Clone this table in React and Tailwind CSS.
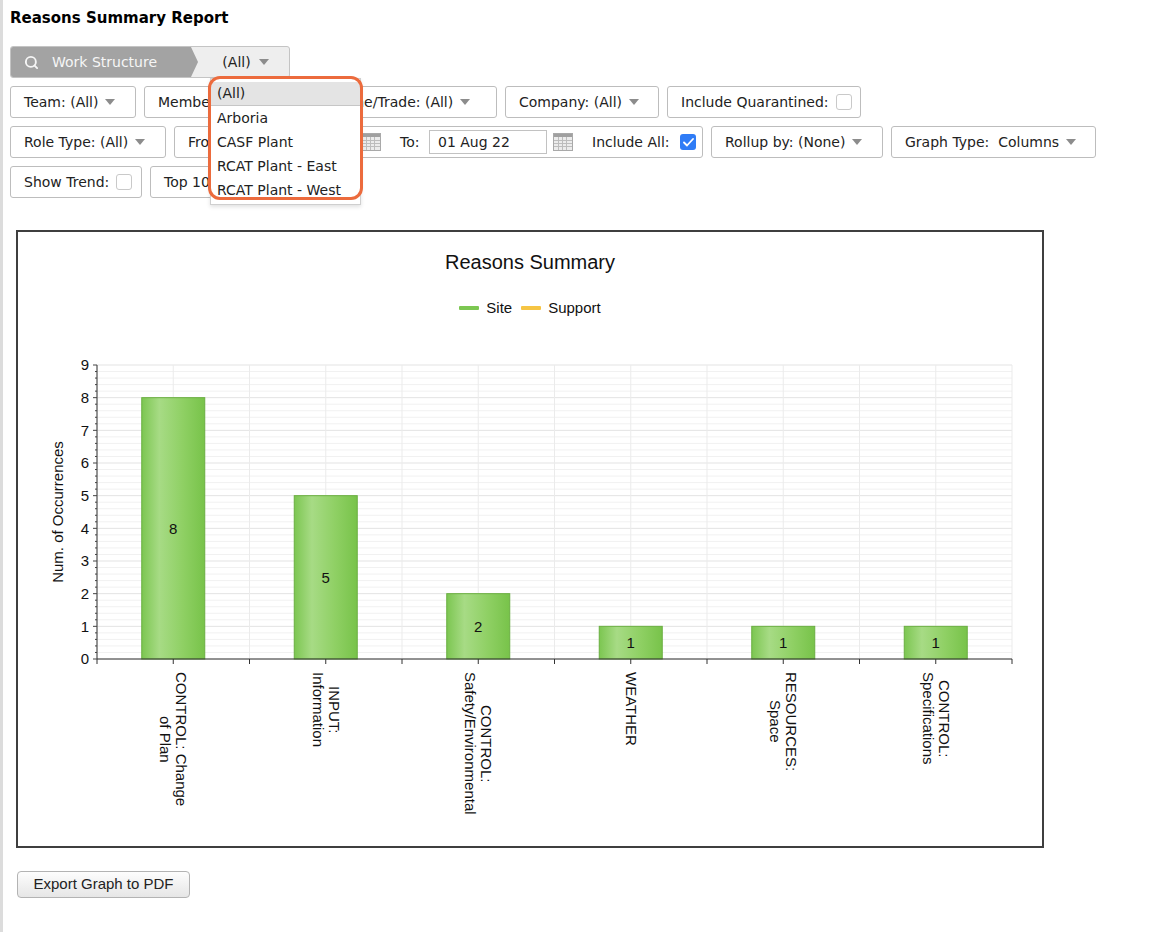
import { Search } from 'lucide-react'

const BARS = [
	{ label: ['CONTROL: Change', 'of Plan'], value: 8 },
	{ label: ['INPUT:', 'Information'], value: 5 },
	{ label: ['CONTROL:', 'Safety/Environmental'], value: 2 },
	{ label: ['WEATHER'], value: 1 },
	{ label: ['RESOURCES:', 'Space'], value: 1 },
	{ label: ['CONTROL:', 'Specifications'], value: 1 },
]

const WORK_STRUCTURES = ['(All)', 'Arboria', 'CASF Plant', 'RCAT Plant - East', 'RCAT Plant - West']

// plot geometry (svg coords)
const X0 = 79
const X1 = 994
const Y0 = 319
const YTOP = 25
const UNIT = (Y0 - YTOP) / 9
const HALF = (X1 - X0) / 12

function Caret() {
	return (
		<svg width="10" height="6" viewBox="0 0 10 6" className="shrink-0">
			<path d="M0 0h10L5 6z" fill="#8c8c8c" />
		</svg>
	)
}

function Checkbox({ checked }) {
	if (checked) {
		return (
			<span className="flex h-[16px] w-[16px] shrink-0 items-center justify-center rounded-[3px] bg-[#2f7cf6]">
				<svg width="11" height="9" viewBox="0 0 11 9">
					<path d="M1 4.5l3 3L10 1" fill="none" stroke="#fff" strokeWidth="1.8" strokeLinecap="round" strokeLinejoin="round" />
				</svg>
			</span>
		)
	}
	return <span className="h-[16px] w-[16px] shrink-0 rounded-[3px] border border-[#c9c9c9] bg-white" />
}

function CalendarIcon() {
	return (
		<svg width="20" height="18" viewBox="0 0 20 18" className="shrink-0">
			<rect x="0.5" y="0.5" width="19" height="17" fill="#ececec" stroke="#a9a9a9" />
			<rect x="1" y="1" width="18" height="3" fill="#a0a0a0" />
			{[5, 9, 13].map((x) => (
				<line key={x} x1={x + 0.5} y1="4" x2={x + 0.5} y2="17" stroke="#bdbdbd" />
			))}
			{[7, 10, 13].map((y) => (
				<line key={y} x1="1" y1={y + 0.5} x2="19" y2={y + 0.5} stroke="#bdbdbd" />
			))}
		</svg>
	)
}

function Box({ className, children }) {
	return (
		<div className={`flex h-[32px] shrink-0 items-center gap-[7px] overflow-hidden whitespace-nowrap rounded-[3px] border border-[#bdbdbd] bg-white px-[13px] ${className}`}>
			{children}
		</div>
	)
}

function DateInput({ value }) {
	return (
		<div className="flex h-[24px] w-[118px] shrink-0 items-center border border-[#c2c2c2] bg-white pl-[8px]">
			{value}
		</div>
	)
}

function Chart() {
	const minor = []
	for (let k = 0; k <= 45; k++) minor.push(Y0 - (k * UNIT) / 5)

	return (
		<svg width="1024" height="330" viewBox="0 0 1024 330" className="block font-['Liberation_Sans',Arial,sans-serif]">
			<defs>
				<linearGradient id="barGrad" x1="0" y1="0" x2="1" y2="0">
					<stop offset="0%" stopColor="#7cc651" />
					<stop offset="28%" stopColor="#a7db85" />
					<stop offset="65%" stopColor="#8fd064" />
					<stop offset="100%" stopColor="#78c34a" />
				</linearGradient>
			</defs>

			{/* grid */}
			{minor.map((y, k) => (
				<line key={'m' + k} x1={X0} y1={y} x2={X1} y2={y} stroke={k % 5 === 0 ? '#e3e3e3' : '#f1f1f1'} />
			))}
			{Array.from({ length: 13 }).map((_, i) => (
				<line key={'v' + i} x1={X0 + i * HALF} y1={YTOP} x2={X0 + i * HALF} y2={Y0} stroke="#ebebeb" />
			))}

			{/* bars */}
			{BARS.map((b, i) => {
				const cx = X0 + HALF + i * 2 * HALF
				const h = b.value * UNIT
				return (
					<g key={i}>
						<rect x={cx - 31.5} y={Y0 - h} width="63" height={h} fill="url(#barGrad)" stroke="#6aae40" />
						<text x={cx} y={Y0 - h / 2} dy="0.35em" textAnchor="middle" fontSize="15" fill="#111">
							{b.value}
						</text>
					</g>
				)
			})}

			{/* axes */}
			<line x1={X0} y1={YTOP} x2={X0} y2={Y0} stroke="#333" />
			<line x1={X0} y1={Y0} x2={X1} y2={Y0} stroke="#333" />
			{minor.map((y, k) => (
				<line key={'t' + k} x1={X0 - (k % 5 === 0 ? 4 : 2)} y1={y} x2={X0} y2={y} stroke="#444" />
			))}
			{Array.from({ length: 13 }).map((_, i) => (
				<line key={'x' + i} x1={X0 + i * HALF} y1={Y0} x2={X0 + i * HALF} y2={Y0 + 5} stroke="#333" />
			))}

			{/* y labels */}
			{Array.from({ length: 10 }).map((_, n) => (
				<text key={'y' + n} x="71" y={Y0 - n * UNIT} dy="0.35em" textAnchor="end" fontSize="15" fill="#111">
					{n}
				</text>
			))}
			<text x="40" y="172" dy="0.35em" textAnchor="middle" fontSize="15" fill="#111" transform="rotate(-90 40 172)">
				Num. of Occurrences
			</text>
		</svg>
	)
}

export default function App() {
	return (
		<div className="relative min-h-screen border-l-[3px] border-[#dcdcdc] bg-white pl-[7px] pt-[8px] font-['DejaVu_Sans',Verdana,sans-serif] text-[14px] text-[#222]">
			<h1 className="text-[15px] font-bold leading-[20px] text-black">Reasons Summary Report</h1>

			{/* Work structure selector */}
			<div className="mt-[18px] flex h-[32px] w-[280px] overflow-hidden rounded-[3px] border border-[#c4c4c4] bg-[#eeeeee]">
				<div className="flex w-[187px] shrink-0 items-center gap-[13px] bg-[#a3a3a3] pl-[13px] text-[#f6f6f6] [clip-path:polygon(0_0,180px_0,187px_50%,180px_100%,0_100%)]">
					<Search size={15} strokeWidth={3} />
					<span>Work Structure</span>
				</div>
				<div className="flex flex-1 items-center justify-center gap-[8px] pl-[4px]">
					<span>(All)</span>
					<Caret />
				</div>
			</div>

			{/* Filters */}
			<div className="mt-[8px] flex gap-[8px]">
				<Box className="w-[126px]">
					<span>Team: (All)</span>
					<Caret />
				</Box>
				<Box className="w-[139px]">
					<span>Member: (All)</span>
					<Caret />
				</Box>
				<Box className="w-[206px]">
					<span>Discipline/Trade: (All)</span>
					<Caret />
				</Box>
				<Box className="w-[154px]">
					<span>Company: (All)</span>
					<Caret />
				</Box>
				<Box className="w-[194px]">
					<span>Include Quarantined:</span>
					<Checkbox />
				</Box>
			</div>

			<div className="mt-[8px] flex gap-[8px]">
				<Box className="w-[156px]">
					<span>Role Type: (All)</span>
					<Caret />
				</Box>
				<div className="flex h-[32px] w-[529px] shrink-0 items-center whitespace-nowrap rounded-[3px] border border-[#bdbdbd] bg-white pl-[13px]">
					<span className="w-[42px]">From:</span>
					<span className="ml-[7px]">
						<DateInput value="01 Jul 22" />
					</span>
					<span className="ml-[6px]">
						<CalendarIcon />
					</span>
					<span className="ml-[19px] w-[22px]">To:</span>
					<span className="ml-[7px]">
						<DateInput value="01 Aug 22" />
					</span>
					<span className="ml-[6px]">
						<CalendarIcon />
					</span>
					<span className="ml-[19px] w-[81px]">Include All:</span>
					<span className="ml-[7px]">
						<Checkbox checked />
					</span>
				</div>
				<Box className="w-[172px]">
					<span>Rollup by: (None)</span>
					<Caret />
				</Box>
				<Box className="w-[205px]">
					<span>Graph Type:&nbsp; Columns</span>
					<Caret />
				</Box>
			</div>

			<div className="mt-[8px] flex gap-[8px]">
				<Box className="w-[132px]">
					<span>Show Trend:</span>
					<Checkbox />
				</Box>
				<Box className="w-[190px]">
					<span>Top 10: (All)</span>
					<Caret />
				</Box>
			</div>

			{/* Chart */}
			<div className="ml-[6px] mt-[32px] h-[618px] w-[1028px] border-2 border-[#3f3f3f] bg-white font-['Liberation_Sans',Arial,sans-serif] text-[#111]">
				<div className="pt-[18px] text-center text-[20px] leading-[24px]">Reasons Summary</div>
				<div className="mt-[25px] flex items-center justify-center gap-[9px] text-[15px] leading-[18px]">
					<div className="flex items-center gap-[7px]">
						<span className="h-[4px] w-[20px] rounded-[1px] bg-[#7cc752]" />
						<span>Site</span>
					</div>
					<div className="flex items-center gap-[7px]">
						<span className="h-[4px] w-[20px] rounded-[1px] bg-[#f6c544]" />
						<span>Support</span>
					</div>
				</div>
				<div className="mt-[23px]">
					<Chart />
				</div>
				<div className="ml-[79px] mt-[2px] grid w-[915px] grid-cols-6">
					{BARS.map((b, i) => (
						<div key={i} className="flex items-start justify-center">
							<div className="text-center text-[15px] leading-[16px] [writing-mode:vertical-rl]">
								{b.label.map((line, j) => (
									<div key={j}>{line}</div>
								))}
							</div>
						</div>
					))}
				</div>
			</div>

			<button className="ml-[7px] mt-[23px] h-[27px] w-[173px] rounded-[4px] border border-[#b3b3b3] bg-gradient-to-b from-[#fdfdfd] to-[#e6e6e6] font-['Liberation_Sans',Arial,sans-serif] text-[15px] text-[#222]">
				Export Graph to PDF
			</button>

			{/* Open work structure dropdown */}
			<div className="absolute left-[207px] top-[78px] w-[151px] border border-[#cfcfcf] bg-white pt-[3px] pb-[2px] shadow-[0_2px_4px_rgba(0,0,0,0.12)]">
				{WORK_STRUCTURES.map((item, i) => (
					<div
						key={item}
						className={`flex h-[24px] items-center whitespace-nowrap px-[6px] ${i === 0 ? 'border-b border-[#c6c6c6] bg-[#e4e4e4]' : ''}`}
					>
						{item}
					</div>
				))}
			</div>
			<div className="pointer-events-none absolute left-[205px] top-[76px] h-[124px] w-[155px] rounded-[12px] border-[3px] border-[#ec6b3d]" />
		</div>
	)
}
